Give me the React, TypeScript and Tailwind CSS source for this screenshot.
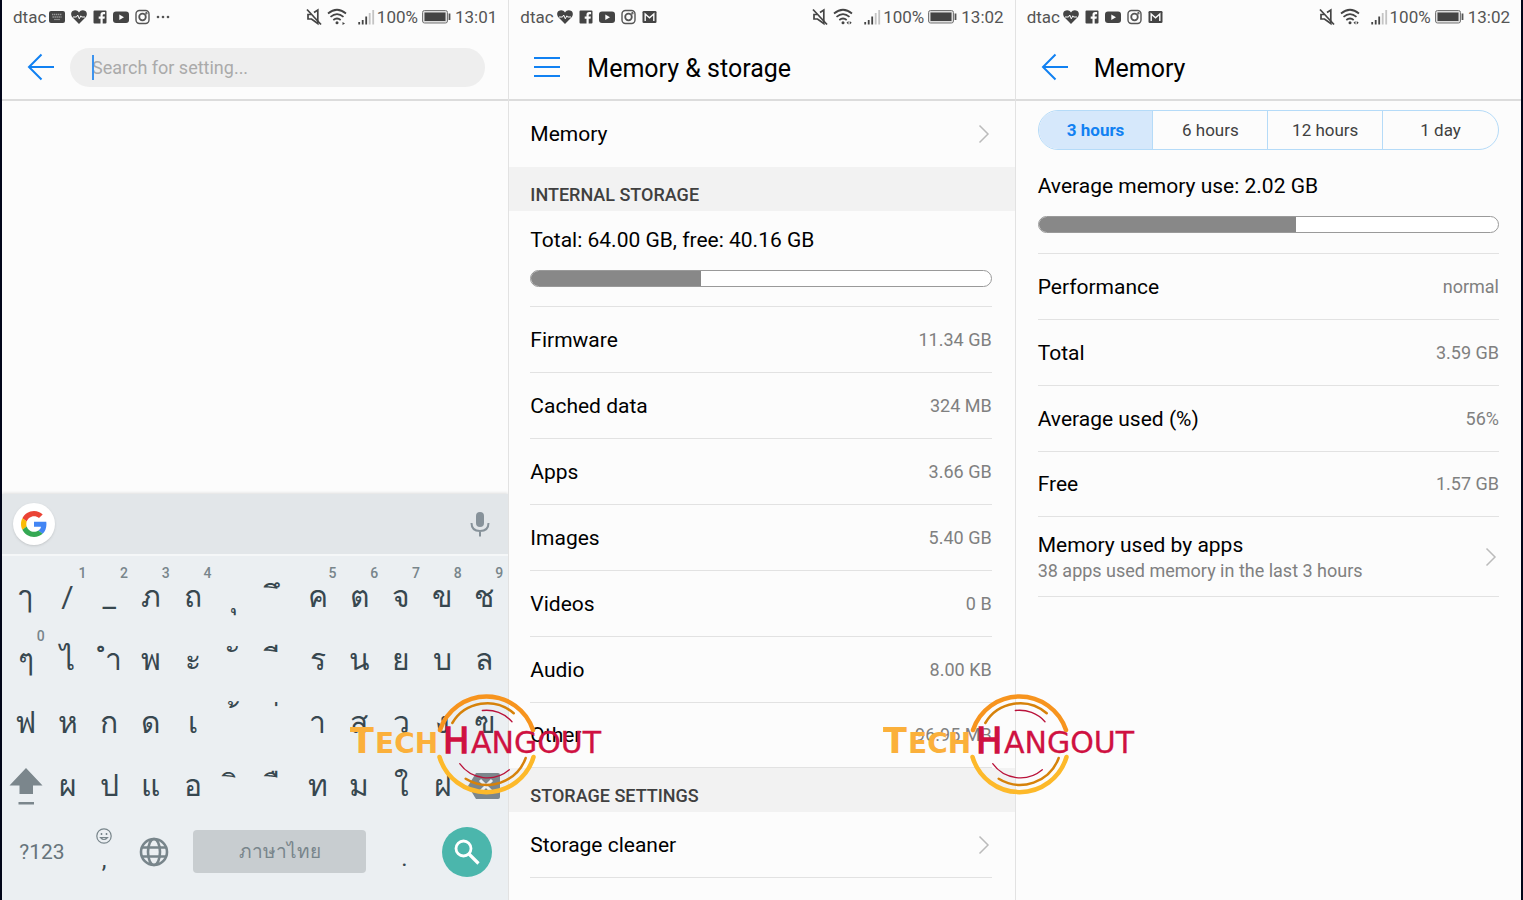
import type { ReactNode } from "react";
import { useState } from "react";

type StatusIcon = "keyboard" | "heart" | "facebook" | "youtube" | "instagram" | "gmail" | "more";

const statusIcons: Record<StatusIcon, ReactNode> = {
  keyboard: (
    <svg width="16" height="16" viewBox="0 0 16 16">
      <rect x="0" y="2" width="16" height="12" rx="2" fill="#444" />
      <path d="M3 5.5h10M3.5 8h9" stroke="#999" strokeWidth="1.4" strokeDasharray="1.4 0.6" />
      <path d="M5 10.5h6" stroke="#888" strokeWidth="1.2" />
    </svg>
  ),
  heart: (
    <svg width="16" height="16" viewBox="0 0 16 16">
      <path d="M8 15 1.6 8.6C-.4 6.4-.2 3.4 1.6 2.1 3.7.5 6.6 1 8 3.400 9.4 1 12.3.5 14.4 2.1c1.8 1.3 2 4.3 0 6.5Z" fill="#444" />
      <path d="M2 8h3.500l1.200-2L8.300 9.800l1.500-3 .8 1.200H14" fill="none" stroke="#fcfcfc" strokeWidth="1" />
    </svg>
  ),
  facebook: (
    <svg width="14" height="16" viewBox="0 0 14 16">
      <path d="M1.500 1.500h11q1 0 1 1v11q0 1-1 1h-2.800V9.700h1.800l.4-2.200H9.700V6.200q0-1 1.100-1h1.300V3.100h-2Q7.500 3.100 7.500 5.700v1.800H5.700v2.200h1.800v4.800h-6q-1 0-1-1v-11q0-1 1-1Z" fill="#444" />
    </svg>
  ),
  youtube: (
    <svg width="16" height="16" viewBox="0 0 16 16">
      <rect x="0" y="2.500" width="16" height="11.500" rx="3" fill="#444" />
      <path d="m6.300 5.500 4.700 2.700-4.700 2.700Z" fill="#fcfcfc" />
    </svg>
  ),
  instagram: (
    <svg width="15" height="16" viewBox="0 0 15 16" fill="none" stroke="#555" strokeWidth="1.400">
      <rect x="1" y="1.500" width="13" height="13" rx="3.500" />
      <circle cx="7.500" cy="8" r="3.300" strokeWidth="1.800" />
      <circle cx="11.400" cy="4.300" r=".5" />
    </svg>
  ),
  gmail: (
    <svg width="15" height="16" viewBox="0 0 15 16">
      <rect x=".5" y="2" width="14" height="12" rx="1.300" fill="#444" />
      <path d="M3.200 12V5l4.300 3.800L11.800 5v7" fill="none" stroke="#fcfcfc" strokeWidth="1.400" />
    </svg>
  ),
  more: (
    <svg width="14" height="16" viewBox="0 0 14 16" fill="#555">
      <circle cx="2" cy="8" r="1.300" />
      <circle cx="7" cy="8" r="1.300" />
      <circle cx="12" cy="8" r="1.300" />
    </svg>
  ),
};

function StatusBar({ icons, time }: { icons: StatusIcon[]; time: string }) {
  return (
    <div className="flex h-[34px] items-center pl-[11px] pr-[11px] text-[17px] leading-5 text-[#555]">
      <span className="mr-[3px]">dtac</span>
      <div className="flex items-center gap-[6px]">
        {icons.map((name) => (
          <span key={name}>{statusIcons[name]}</span>
        ))}
      </div>
      <div className="ml-auto flex items-center">
        <svg width="16" height="18" viewBox="0 0 16 18" fill="none" stroke="#444" strokeWidth="1.700">
          <path d="M8 4.500 11.800 2v13.500L5.500 11H2V6.500h3" />
          <path d="m1 1.500 14 15" />
        </svg>
        <svg className="ml-[5px]" width="20" height="18" viewBox="0 0 20 18" fill="none" stroke="#444" strokeWidth="1.700">
          <path d="M1 5.500q9-7.500 18 0M3.500 8.800q6.500-5.500 13 0M6.300 12q3.700-3 7.400 0" />
          <circle cx="10" cy="14.800" r="1.500" fill="#444" stroke="none" />
          {time === "13:01" ? (
            <path d="m15.500 14 2.500 1.500-2.500 1.500Z" fill="#444" stroke="none" />
          ) : (
            <path d="m15.500 13-2 1.800 2 1.800ZM16.700 13l2 1.800-2 1.800Z" fill="#444" stroke="none" />
          )}
        </svg>
        <svg className="ml-[11px]" width="17" height="18" viewBox="0 0 17 18">
          <path d="M1.200 14v2.500M4.700 12v4.500M8.200 8.500v8" stroke="#444" strokeWidth="1.800" />
          <path d="M11.700 5v11.500M15.200 2v14.500" stroke="#c4c4c4" strokeWidth="1.800" />
        </svg>
        <span className="ml-0.5">100%</span>
        <svg className="mx-1" width="29" height="16" viewBox="0 0 29 16">
          <rect x=".5" y="1.500" width="25" height="12.500" rx="2" fill="#ddd" stroke="#777" />
          <rect x="2.500" y="3.500" width="21" height="8.500" fill="#444" />
          <path d="M27.500 4.500v6.500" stroke="#555" strokeWidth="1.800" />
        </svg>
        <span>{time}</span>
      </div>
    </div>
  );
}

function BackButton() {
  return (
    <button type="button" aria-label="Back">
      <svg width="28" height="28" viewBox="0 0 28 28" fill="none" stroke="#1181f2" strokeWidth="2">
        <path d="M27 14H2M14.500 1.500 2 14l12.500 12.500" />
      </svg>
    </button>
  );
}

function Header({ children }: { children: ReactNode }) {
  return <header className="flex h-[67px] items-center border-b-2 border-[#dcdcdc] pl-[25px] pr-[23px]">{children}</header>;
}

function Chevron() {
  return (
    <svg className="mr-0.5" width="12" height="20" viewBox="0 0 12 20" fill="none" stroke="#bbb" strokeWidth="1.500">
      <path d="m1.500 1.500 8.500 8.500-8.500 8.500" />
    </svg>
  );
}

function UsageBar({ label, percent }: { label: string; percent: number }) {
  return (
    <div
      role="progressbar"
      aria-label={label}
      aria-valuenow={percent}
      className="h-[17px] overflow-hidden rounded-full border border-[#9a9a9a] bg-white"
    >
      <div className="h-full bg-[#888]" style={{ width: `${percent}%` }} />
    </div>
  );
}

function DataRows({ rows }: { rows: { label: string; value: string }[] }) {
  return (
    <dl>
      {rows.map((row) => (
        <div key={row.label} className="flex h-[66px] items-center justify-between border-b border-[#e2e2e2] last:h-[65px]">
          <dt className="text-[21px] leading-6 text-black">{row.label}</dt>
          <dd className="text-[18px] leading-6 text-[#808080]">{row.value}</dd>
        </div>
      ))}
    </dl>
  );
}

function SectionTitle({ children }: { children: ReactNode }) {
  return (
    <h2 className="flex h-11 items-center bg-[#f2f2f2] px-[21px] pt-3 text-[18px] leading-6 font-medium text-[#404040]">
      {children}
    </h2>
  );
}

function Watermark() {
  return (
    <svg width="262" height="106" viewBox="0 0 262 106" fill="none" strokeLinecap="round">
      <path d="M90 39A49 49 0 0 1 183 39" stroke="#f7941e" strokeWidth="4.500" />
      <path d="M89.500 66A49 49 0 0 0 183.500 66" stroke="#fdb92a" strokeWidth="4.500" />
      <path d="M102.300 32A40.500 40.500 0 0 1 163.700 22.300" stroke="#d6820a" strokeWidth="2.500" />
      <path d="M115.700 87.700A41 41 0 0 0 175.700 67" stroke="#d6820a" strokeWidth="2.500" />
      <path d="M132.300 19.500A34 34 0 0 1 162 30.700" stroke="#b9123a" strokeWidth="1.300" />
      <path d="M109.700 72.700A34 34 0 0 0 159.300 78.700" stroke="#b9123a" strokeWidth="1.300" />
      <g fontFamily="'DejaVu Sans', sans-serif" fontWeight="700" fill="#fbb03b">
        <text x="0" y="62" fontSize="35">T</text>
        <text x="25" y="62" fontSize="28">ECH</text>
      </g>
      <g fontFamily="'DejaVu Sans', sans-serif" fill="#cf1141" stroke="#cf1141">
        <text x="93" y="62" fontSize="35" strokeWidth="1.500">H</text>
        <text x="121" y="62" fontSize="30" strokeWidth=".3">ANGOUT</text>
      </g>
    </svg>
  );
}

type Key = { char: string; hint?: string };

const keyRows: Key[][] = [
  [
    { char: "ๅ" },
    { char: "/", hint: "1" },
    { char: "_", hint: "2" },
    { char: "ภ", hint: "3" },
    { char: "ถ", hint: "4" },
    { char: "\u00a0ุ" },
    { char: "\u00a0ึ" },
    { char: "ค", hint: "5" },
    { char: "ต", hint: "6" },
    { char: "จ", hint: "7" },
    { char: "ข", hint: "8" },
    { char: "ช", hint: "9" },
  ],
  [
    { char: "ๆ", hint: "0" },
    { char: "ไ" },
    { char: "\u00a0ำ" },
    { char: "พ" },
    { char: "ะ" },
    { char: "\u00a0ั" },
    { char: "\u00a0ี" },
    { char: "ร" },
    { char: "น" },
    { char: "ย" },
    { char: "บ" },
    { char: "ล" },
  ],
  [
    { char: "ฟ" },
    { char: "ห" },
    { char: "ก" },
    { char: "ด" },
    { char: "เ" },
    { char: "\u00a0้" },
    { char: "\u00a0่" },
    { char: "า" },
    { char: "ส" },
    { char: "ว" },
    { char: "ง" },
    { char: "ฃ" },
  ],
  [
    { char: "shift" },
    { char: "ผ" },
    { char: "ป" },
    { char: "แ" },
    { char: "อ" },
    { char: "\u00a0ิ" },
    { char: "\u00a0ื" },
    { char: "ท" },
    { char: "ม" },
    { char: "ใ" },
    { char: "ฝ" },
    { char: "delete" },
  ],
];

function KeyFace({ char }: { char: string }) {
  if (char === "shift") {
    return (
      <svg width="34" height="38" viewBox="0 0 34 38" fill="#7b868c" role="img" aria-label="Shift">
        <path d="M17 1 33.500 18.500H24V27H10.500v-8.500H.5ZM9.500 35h15.500v2.500H9.500Z" />
      </svg>
    );
  }
  if (char === "delete") {
    return (
      <svg width="34" height="26" viewBox="0 0 34 26" role="img" aria-label="Delete">
        <path d="M9 0h22q2 0 2 2v22q0 2-2 2H9L1 13Z" fill="#7b868c" />
        <path d="m13 7 12 12M25 7 13 19" stroke="#ebeff2" strokeWidth="3" />
      </svg>
    );
  }
  return <>{char}</>;
}

function Keyboard() {
  return (
    <div className="mt-auto bg-[#ebeff2] pb-[17px] shadow-[0_-1px_3px_rgba(0,0,0,0.12)]">
      <div className="flex h-[62px] items-center justify-between border-b-2 border-[#f5f7f8] bg-[#e2e6e9] pl-[11px] pr-[18px]">
        <button type="button" aria-label="Google" className="flex size-[42px] items-center justify-center rounded-full bg-white shadow">
          <svg width="26" height="26" viewBox="0 0 48 48">
            <path fill="#ea4335" d="M24 9.500c3.540 0 6.710 1.220 9.210 3.600l6.850-6.850C35.900 2.380 30.470 0 24 0 14.620 0 6.510 5.380 2.560 13.220l7.980 6.190C12.430 13.720 17.740 9.500 24 9.500z" />
            <path fill="#4285f4" d="M46.980 24.550c0-1.570-.15-3.090-.38-4.550H24v9.020h12.940c-.58 2.960-2.260 5.480-4.780 7.180l7.730 6c4.510-4.180 7.090-10.360 7.090-17.650z" />
            <path fill="#fbbc05" d="M10.530 28.590c-.48-1.450-.76-2.990-.76-4.590s.27-3.140.76-4.590l-7.980-6.190C.92 16.460 0 20.120 0 24c0 3.880.92 7.540 2.560 10.780l7.970-6.190z" />
            <path fill="#34a853" d="M24 48c6.480 0 11.930-2.130 15.890-5.810l-7.730-6c-2.150 1.450-4.920 2.300-8.160 2.300-6.260 0-11.570-4.220-13.470-9.910l-7.980 6.190C6.510 42.620 14.620 48 24 48z" />
          </svg>
        </button>
        <button type="button" aria-label="Voice input">
          <svg width="20" height="26" viewBox="0 0 20 26" fill="none" stroke="#87929a" strokeWidth="2">
            <rect x="6" y="1" width="8" height="15" rx="4" fill="#87929a" stroke="none" />
            <path d="M1.500 12q0 8 8.500 8t8.500-8M10 20v5.500" />
          </svg>
        </button>
      </div>

      <div className="px-[3px] pt-[9px]">
        {keyRows.map((row, i) => (
          <div key={i} className="grid grid-cols-12">
            {row.map((key) => (
              <button
                key={key.char}
                type="button"
                className="relative flex h-[63px] items-center justify-center text-[30px] leading-8 text-[#37474f]"
              >
                <KeyFace char={key.char} />
                {key.hint && (
                  <span className="absolute top-0 right-0.5 text-[14px] leading-4 font-medium text-[#78858b]">{key.hint}</span>
                )}
              </button>
            ))}
          </div>
        ))}

        <div className="mt-[3px] flex h-[63px] items-center pr-[13px]">
          <button type="button" className="w-[74px] text-[21px] leading-6 text-[#66747b]">
            ?123
          </button>
          <button type="button" className="flex w-[50px] flex-col items-center gap-1 pb-1 text-[24px] leading-6 text-[#37474f]">
            <svg width="16" height="16" viewBox="0 0 16 16" fill="none" stroke="#78858b" strokeWidth="1.200">
              <circle cx="8" cy="8" r="7.200" />
              <path d="M4.500 9.500q3.500 4 7 0Z" />
              <path d="M5.500 5v2M10.500 5v2" strokeWidth="1.500" />
            </svg>
            ,
          </button>
          <button type="button" aria-label="Switch language" className="flex w-[50px] justify-center">
            <svg width="30" height="30" viewBox="0 0 30 30" fill="none" stroke="#78858b" strokeWidth="2.600">
              <circle cx="15" cy="15" r="13" />
              <ellipse cx="15" cy="15" rx="6" ry="13" />
              <path d="M3 10.500h24M3 19.500h24" />
            </svg>
          </button>
          <button type="button" className="ml-3.5 h-[43px] flex-1 rounded bg-[#c8cdd0] text-[19px] leading-6 text-[#78858b]">
            ภาษาไทย
          </button>
          <button type="button" className="w-[76px] pt-3 text-[24px] leading-6 text-[#37474f]">
            .
          </button>
          <button type="button" aria-label="Search" className="flex size-[50px] items-center justify-center rounded-full bg-[#4bb6ac]">
            <svg width="26" height="26" viewBox="0 0 26 26" fill="none" stroke="#fff" strokeWidth="2.800">
              <circle cx="9.500" cy="9.500" r="7.500" />
              <path d="m15 15 9.500 9.500" strokeWidth="3.200" />
            </svg>
          </button>
        </div>
      </div>
    </div>
  );
}

function SearchScreen() {
  return (
    <section className="relative flex flex-col bg-[#fcfcfc]">
      <StatusBar icons={["keyboard", "heart", "facebook", "youtube", "instagram", "more"]} time="13:01" />
      <Header>
        <BackButton />
        <div className="relative ml-[15px] flex-1 pt-0.5">
          <input
            type="text"
            aria-label="Search for setting"
            placeholder="Search for setting..."
            className="block h-[39px] w-full rounded-full bg-[#eee] px-[22px] text-[18px] text-black outline-none placeholder:text-[#aaa]"
          />
          <span className="absolute top-[9px] left-[22px] h-[25px] w-0.5 bg-[#3c93ee]" />
        </div>
      </Header>
      <Keyboard />
      <div className="pointer-events-none absolute top-[691px] -right-[104px] z-10">
        <Watermark />
      </div>
    </section>
  );
}

const storageRows = [
  { label: "Firmware", value: "11.34 GB" },
  { label: "Cached data", value: "324 MB" },
  { label: "Apps", value: "3.66 GB" },
  { label: "Images", value: "5.40 GB" },
  { label: "Videos", value: "0 B" },
  { label: "Audio", value: "8.00 KB" },
  { label: "Other", value: "96.95 MB" },
];

function StorageScreen() {
  return (
    <section className="relative border-l border-[#e2e2e2] bg-[#fcfcfc]">
      <StatusBar icons={["heart", "facebook", "youtube", "instagram", "gmail"]} time="13:02" />
      <Header>
        <button type="button" aria-label="Menu">
          <svg width="28" height="22" viewBox="0 0 28 22" stroke="#1181f2" strokeWidth="2">
            <path d="M0 2h26M0 11h26M0 20h26" />
          </svg>
        </button>
        <h1 className="ml-[25px] pt-1 text-[25px] leading-8 text-black">Memory &amp; storage</h1>
      </Header>
      <button type="button" className="flex h-[66px] w-full items-center justify-between pl-[21px] pr-[23px] text-[21px] leading-6 text-black">
        Memory
        <Chevron />
      </button>
      <SectionTitle>INTERNAL STORAGE</SectionTitle>
      <div className="pl-[21px] pr-[23px]">
        <div className="border-b border-[#e2e2e2] pt-[17px] pb-[19px]">
          <p className="mb-[18px] text-[21px] leading-6 text-black">Total: 64.00 GB, free: 40.16 GB</p>
          <UsageBar label="Internal storage used" percent={37} />
        </div>
        <DataRows rows={storageRows} />
      </div>
      <SectionTitle>STORAGE SETTINGS</SectionTitle>
      <div className="pl-[21px] pr-[23px]">
        <button type="button" className="flex h-[66px] w-full items-center justify-between border-b border-[#e2e2e2] text-[21px] leading-6 text-black">
          Storage cleaner
          <Chevron />
        </button>
      </div>
      <div className="pointer-events-none absolute top-[691px] -right-[130px] z-10">
        <Watermark />
      </div>
    </section>
  );
}

const periods = ["3 hours", "6 hours", "12 hours", "1 day"];

const memoryRows = [
  { label: "Performance", value: "normal" },
  { label: "Total", value: "3.59 GB" },
  { label: "Average used (%)", value: "56%" },
  { label: "Free", value: "1.57 GB" },
];

function MemoryScreen() {
  const [period, setPeriod] = useState("3 hours");

  return (
    <section className="border-l border-[#e2e2e2] bg-[#fcfcfc]">
      <StatusBar icons={["heart", "facebook", "youtube", "instagram", "gmail"]} time="13:02" />
      <Header>
        <BackButton />
        <h1 className="ml-[25px] pt-1 text-[25px] leading-8 text-black">Memory</h1>
      </Header>
      <div className="px-[22px] pt-[9px]">
        <div className="grid h-10 grid-cols-4 divide-x divide-[#b5dbf8] overflow-hidden rounded-full border border-[#b5dbf8]">
          {periods.map((item) => (
            <button
              key={item}
              type="button"
              onClick={() => setPeriod(item)}
              className={
                item === period
                  ? "bg-[#d6e8fb] text-[17px] leading-6 font-bold text-[#1181f2]"
                  : "text-[17px] leading-6 text-[#404040]"
              }
            >
              {item}
            </button>
          ))}
        </div>
        <div className="border-b border-[#e2e2e2] pt-6 pb-5">
          <p className="mb-[18px] text-[21px] leading-6 text-black">Average memory use: 2.02 GB</p>
          <UsageBar label="Average memory use" percent={56} />
        </div>
        <DataRows rows={memoryRows} />
        <button type="button" className="flex h-20 w-full items-center justify-between border-b border-[#e2e2e2] text-left">
          <span>
            <span className="block text-[21px] leading-7 text-black">Memory used by apps</span>
            <span className="block text-[18px] leading-6 text-[#808080]">38 apps used memory in the last 3 hours</span>
          </span>
          <Chevron />
        </button>
      </div>
    </section>
  );
}

export default function App() {
  return (
    <main className="grid min-h-screen grid-cols-3 overflow-hidden bg-[#02061a] px-0.5 font-['Roboto','Noto_Sans',sans-serif]">
      <SearchScreen />
      <StorageScreen />
      <MemoryScreen />
    </main>
  );
}
